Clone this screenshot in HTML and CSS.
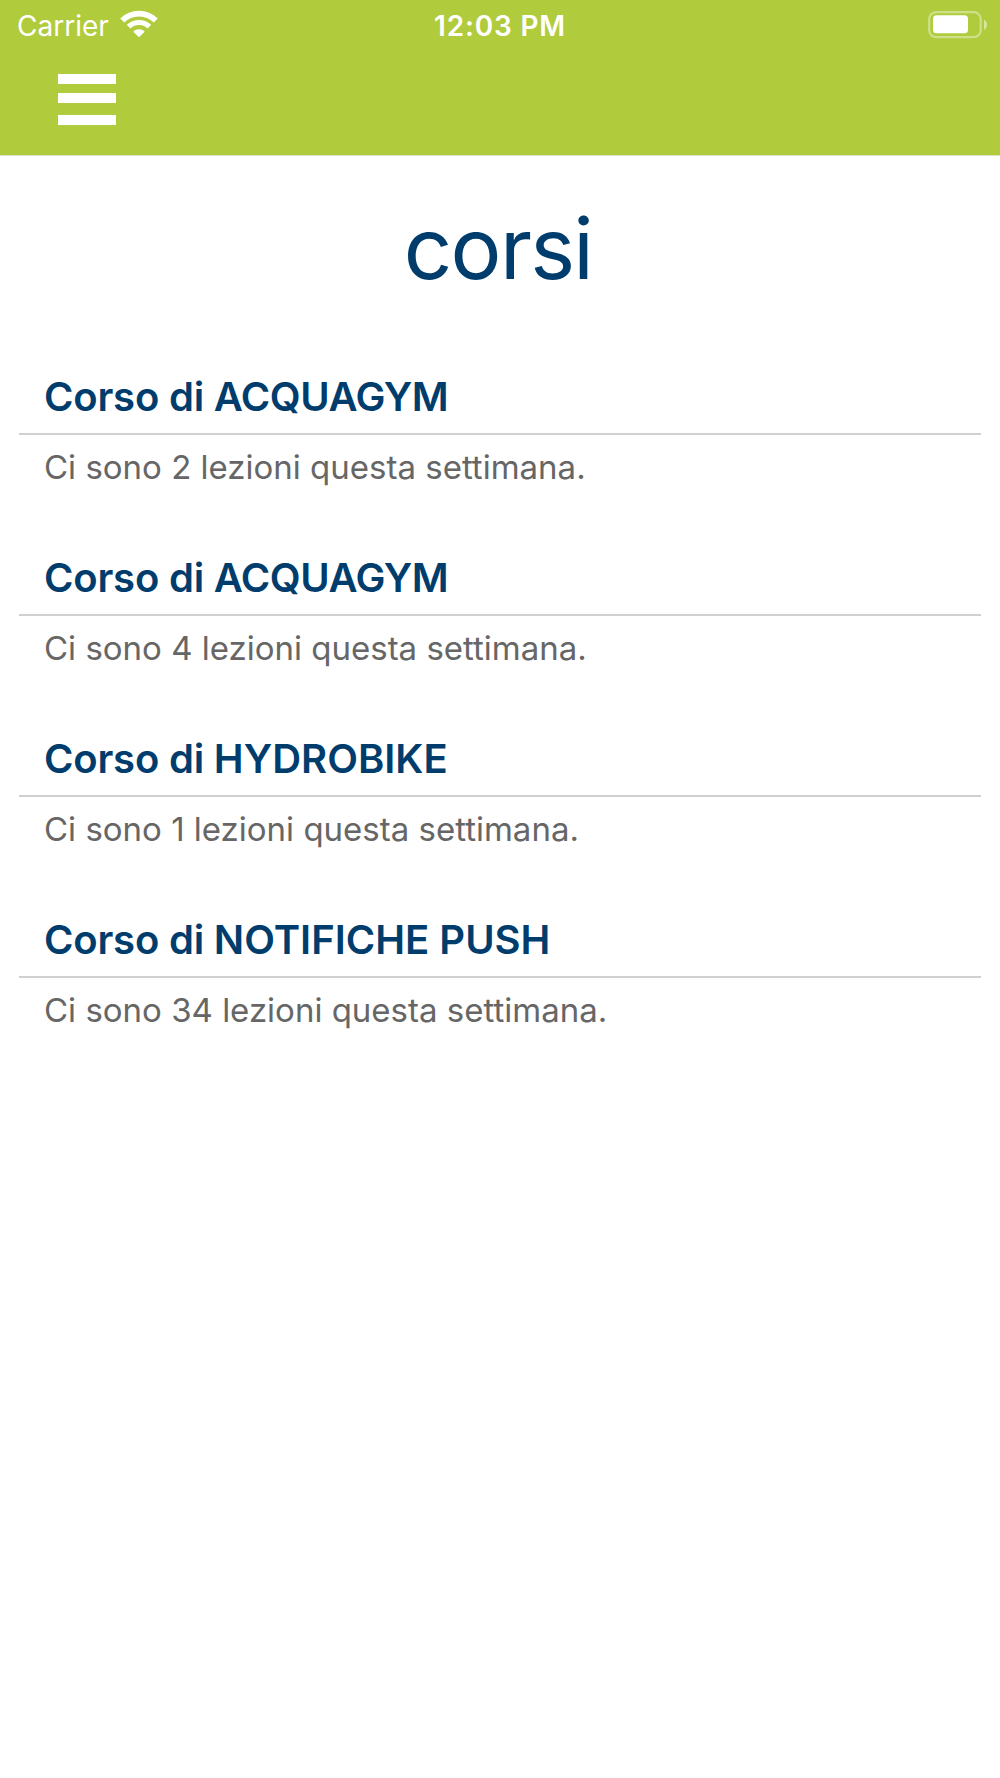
FILE: index.html
```
<!DOCTYPE html>
<html lang="it">
<head>
    <meta charset="UTF-8">
    <meta name="viewport" content="width=device-width, initial-scale=1.0">
    <title>corsi</title>
    <link rel="stylesheet" href="styles.css">
</head>
<body>
    <header class="header">
        <div class="status-bar">
            <div class="status-left">
                <span class="carrier">Carrier</span>
                <svg class="wifi-icon" width="38" height="28" viewBox="0 0 38 28" fill="none" stroke="#fff">
                    <path d="M2.2 10.5C11.5 1.3 26.5 1.3 35.8 10.5" stroke-width="5.6"></path>
                    <path d="M8.6 16.7C14.4 11.1 23.6 11.1 29.4 16.7" stroke-width="5.2"></path>
                    <path d="M13.3 21.7C16.5 18.5 21.5 18.5 24.7 21.7L19 27.3Z" fill="#fff" stroke="none"></path>
                </svg>
            </div>
            <span class="time">12:03 PM</span>
            <div class="status-right">
                <svg class="battery-icon" width="60" height="28" viewBox="0 0 60 28">
                    <rect x="1.2" y="1.2" width="51.5" height="25" rx="7" fill="none" stroke="#fff" stroke-opacity="0.4" stroke-width="2.2"></rect>
                    <rect x="5" y="4.2" width="35" height="18" rx="3.5" fill="#fff"></rect>
                    <path d="M56 8.5V19C60 17 60 10.5 56 8.5Z" fill="#fff" fill-opacity="0.5"></path>
                </svg>
            </div>
        </div>
        <button class="menu-btn" aria-label="Menu">
            <span></span>
            <span></span>
            <span></span>
        </button>
    </header>

    <main class="container">
        <h1>corsi</h1>

        <section class="course">
            <h2>Corso di <span class="name-tight">ACQUAGYM</span></h2>
            <p>Ci sono 2 lezioni questa settimana.</p>
        </section>
        <section class="course">
            <h2>Corso di <span class="name-tight">ACQUAGYM</span></h2>
            <p>Ci sono 4 lezioni questa settimana.</p>
        </section>
        <section class="course">
            <h2>Corso di <span class="name">HYDROBIKE</span></h2>
            <p>Ci sono 1 lezioni questa settimana.</p>
        </section>
        <section class="course">
            <h2>Corso di <span class="name">NOTIFICHE PUSH</span></h2>
            <p>Ci sono 34 lezioni questa settimana.</p>
        </section>
    </main>
</body>
</html>
```
FILE: styles.css
```
:root {
    --green: #b0cb3c;
    --blue: #003d6d;
    --gray: #666;
    --line: #d0d0d0;
}

* {
    margin: 0;
    padding: 0;
    box-sizing: border-box;
}

body {
    font-family: 'Inter', sans-serif;
    background-color: #fff;
    min-height: 100vh;
}

.header {
    height: 156px;
    background-color: var(--green);
    border-bottom: 1px solid #dadfce;
}

.status-bar {
    display: grid;
    grid-template-columns: 1fr auto 1fr;
    align-items: center;
    height: 50px;
    padding: 1px 12px 0 17px;
    color: #fff;
    font-size: 28px;
    line-height: 34px;
}

.status-left,
.status-right {
    display: flex;
    align-items: center;
}

.status-left {
    gap: 11px;
}

.wifi-icon {
    margin-top: -3px;
}

.battery-icon {
    margin-top: -2px;
}

.status-right {
    justify-content: flex-end;
}

.time {
    padding-right: 5px;
    font-weight: 600;
    letter-spacing: 0.8px;
}

.menu-btn {
    display: flex;
    flex-direction: column;
    width: 58px;
    margin: 24px 0 0 58px;
    background: none;
    border: none;
}

.menu-btn span {
    width: 100%;
    height: 10px;
    margin-bottom: 12px;
    background-color: #fff;
}

.menu-btn span:first-child {
    margin-bottom: 9px;
}

.container {
    padding: 0 19px;
}

h1 {
    padding: 42px 4px 71.5px 0;
    color: var(--blue);
    font-size: 85px;
    font-weight: 400;
    letter-spacing: -1.7px;
    line-height: 102px;
    text-align: center;
}

.course {
    height: 181.15px;
}

h2 {
    padding: 0 25px 11px;
    border-bottom: 2px solid var(--line);
    color: var(--blue);
    font-size: 40px;
    font-weight: 600;
    letter-spacing: -0.2px;
    line-height: 50px;
}

.name {
    letter-spacing: 0;
}

.name-tight {
    letter-spacing: -0.5px;
}

.course p {
    padding: 12.5px 25px 0;
    color: var(--gray);
    font-size: 33px;
    line-height: 40px;
}
```
